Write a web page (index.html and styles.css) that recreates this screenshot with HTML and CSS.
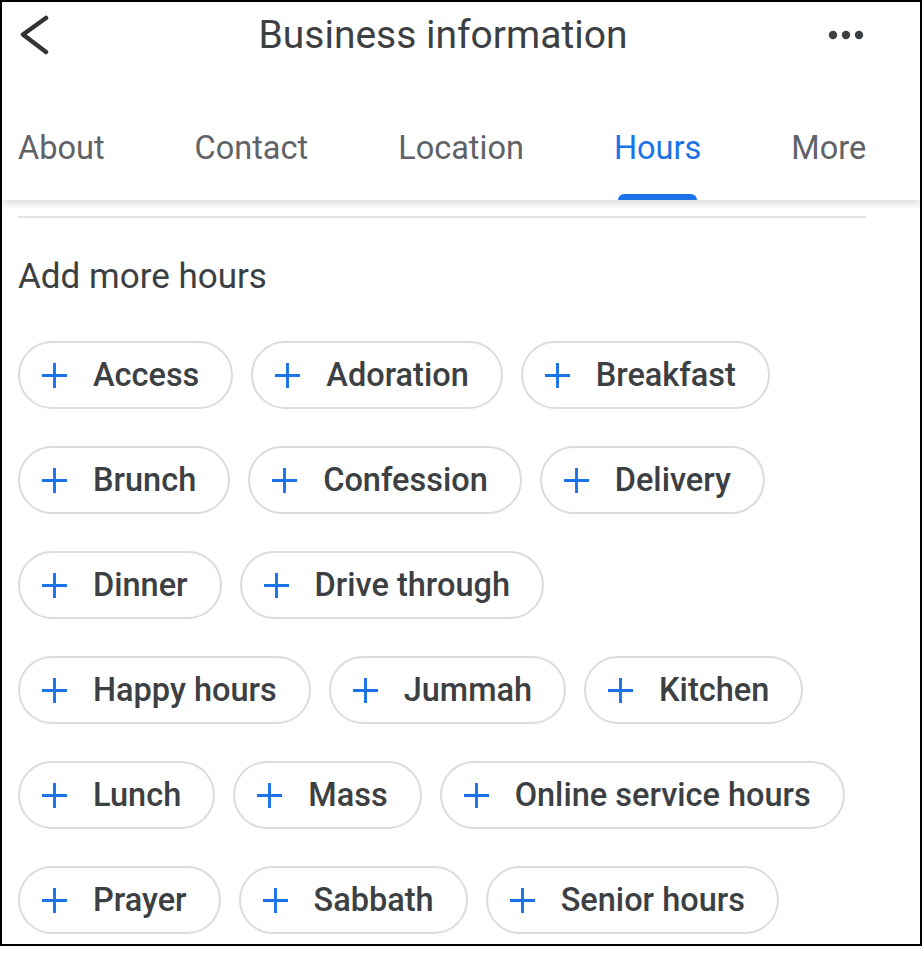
FILE: index.html
```html
<!DOCTYPE html>
<html lang="en">
<head>
    <meta charset="UTF-8">
    <title>Business information</title>
    <link rel="stylesheet" href="styles.css">
</head>
<body>
    <div class="frame">
        <header class="app-header">
            <div class="top-bar">
                <svg class="back" width="32" height="40" viewBox="0 0 32 40">
                    <polyline points="28,3 5,19.5 28,37" fill="none" stroke="#333" stroke-width="4.5" stroke-linecap="round" stroke-linejoin="round"/>
                </svg>
                <h1 class="title">Business information</h1>
                <svg class="menu" width="40" height="12" viewBox="0 0 40 12">
                    <circle cx="5" cy="6" r="4.2" fill="#3c4043"/>
                    <circle cx="18" cy="6" r="4.2" fill="#3c4043"/>
                    <circle cx="31" cy="6" r="4.2" fill="#3c4043"/>
                </svg>
            </div>
            <nav class="tabs">
                <span class="tab">About</span>
                <span class="tab">Contact</span>
                <span class="tab">Location</span>
                <span class="tab active">Hours</span>
                <span class="tab">More</span>
            </nav>
        </header>

        <div class="divider"></div>

        <section class="more-hours">
            <h2 class="section-title">Add more hours</h2>
            <div class="chips">
                <div class="chip-row">
                    <span class="chip"><svg class="plus" viewBox="0 0 28 28"><path d="M14 1v26M1 14h26"/></svg>Access</span>
                    <span class="chip"><svg class="plus" viewBox="0 0 28 28"><path d="M14 1v26M1 14h26"/></svg>Adoration</span>
                    <span class="chip"><svg class="plus" viewBox="0 0 28 28"><path d="M14 1v26M1 14h26"/></svg>Breakfast</span>
                </div>
                <div class="chip-row">
                    <span class="chip"><svg class="plus" viewBox="0 0 28 28"><path d="M14 1v26M1 14h26"/></svg>Brunch</span>
                    <span class="chip"><svg class="plus" viewBox="0 0 28 28"><path d="M14 1v26M1 14h26"/></svg>Confession</span>
                    <span class="chip"><svg class="plus" viewBox="0 0 28 28"><path d="M14 1v26M1 14h26"/></svg>Delivery</span>
                </div>
                <div class="chip-row">
                    <span class="chip"><svg class="plus" viewBox="0 0 28 28"><path d="M14 1v26M1 14h26"/></svg>Dinner</span>
                    <span class="chip"><svg class="plus" viewBox="0 0 28 28"><path d="M14 1v26M1 14h26"/></svg>Drive through</span>
                </div>
                <div class="chip-row">
                    <span class="chip"><svg class="plus" viewBox="0 0 28 28"><path d="M14 1v26M1 14h26"/></svg>Happy hours</span>
                    <span class="chip"><svg class="plus" viewBox="0 0 28 28"><path d="M14 1v26M1 14h26"/></svg>Jummah</span>
                    <span class="chip"><svg class="plus" viewBox="0 0 28 28"><path d="M14 1v26M1 14h26"/></svg>Kitchen</span>
                </div>
                <div class="chip-row">
                    <span class="chip"><svg class="plus" viewBox="0 0 28 28"><path d="M14 1v26M1 14h26"/></svg>Lunch</span>
                    <span class="chip"><svg class="plus" viewBox="0 0 28 28"><path d="M14 1v26M1 14h26"/></svg>Mass</span>
                    <span class="chip"><svg class="plus" viewBox="0 0 28 28"><path d="M14 1v26M1 14h26"/></svg>Online service hours</span>
                </div>
                <div class="chip-row">
                    <span class="chip"><svg class="plus" viewBox="0 0 28 28"><path d="M14 1v26M1 14h26"/></svg>Prayer</span>
                    <span class="chip"><svg class="plus" viewBox="0 0 28 28"><path d="M14 1v26M1 14h26"/></svg>Sabbath</span>
                    <span class="chip"><svg class="plus" viewBox="0 0 28 28"><path d="M14 1v26M1 14h26"/></svg>Senior hours</span>
                </div>
            </div>
        </section>
    </div>
</body>
</html>
```

FILE: styles.css
```css
body {
    margin: 0;
    background-color: #fff;
    font-family: Roboto, "Liberation Sans", sans-serif;
    color: #3c4043;
}
.frame {
    width: 922px;
    height: 946px;
    box-sizing: border-box;
    border: 2px solid #000;
    overflow: hidden;
}
.app-header {
    background-color: #fff;
    box-shadow: 0 3px 8px rgba(0, 0, 0, 0.16);
}
.top-bar {
    height: 66px;
    display: grid;
    grid-template-columns: 48px 1fr 48px;
    align-items: center;
    padding: 0 52px 0 16px;
}
.back {
    display: block;
}
.menu {
    display: block;
    justify-self: end;
}
.title {
    margin: 0;
    font-size: 39px;
    font-weight: 400;
    text-align: center;
    color: #3c4043;
}
.tabs {
    height: 104px;
    padding: 28px 0 0 16px;
    display: flex;
    gap: 90px;
    align-items: center;
}
.tab {
    position: relative;
    font-size: 32.5px;
    font-weight: 400;
    color: #5f6368;
    height: 104px;
    line-height: 104px;
}
.tab.active {
    color: #1a73e8;
}
.tab.active::after {
    content: "";
    position: absolute;
    left: 4px;
    right: 4px;
    bottom: 0;
    height: 6px;
    background-color: #1a73e8;
    border-radius: 6px 6px 0 0;
}
.divider {
    height: 2px;
    margin: 16px 54px 0 16px;
    background-color: #e3e3e3;
}
.more-hours {
    padding: 0 16px;
}
.section-title {
    margin: 39px 0 44px;
    font-size: 35px;
    line-height: 40px;
    font-weight: 400;
    color: #3c4043;
}
.chips {
    display: flex;
    flex-direction: column;
    gap: 37px;
}
.chip-row {
    display: flex;
    gap: 18px;
}
.chip {
    height: 68px;
    box-sizing: border-box;
    border: 2px solid #dadce0;
    border-radius: 34px;
    padding: 0 32px 0 21px;
    display: flex;
    align-items: center;
    gap: 25px;
    font-size: 32.5px;
    font-weight: 500;
    color: #3c4043;
    white-space: nowrap;
}
.plus {
    width: 27px;
    height: 27px;
    fill: none;
    stroke: #1a73e8;
    stroke-width: 3;
}
```
